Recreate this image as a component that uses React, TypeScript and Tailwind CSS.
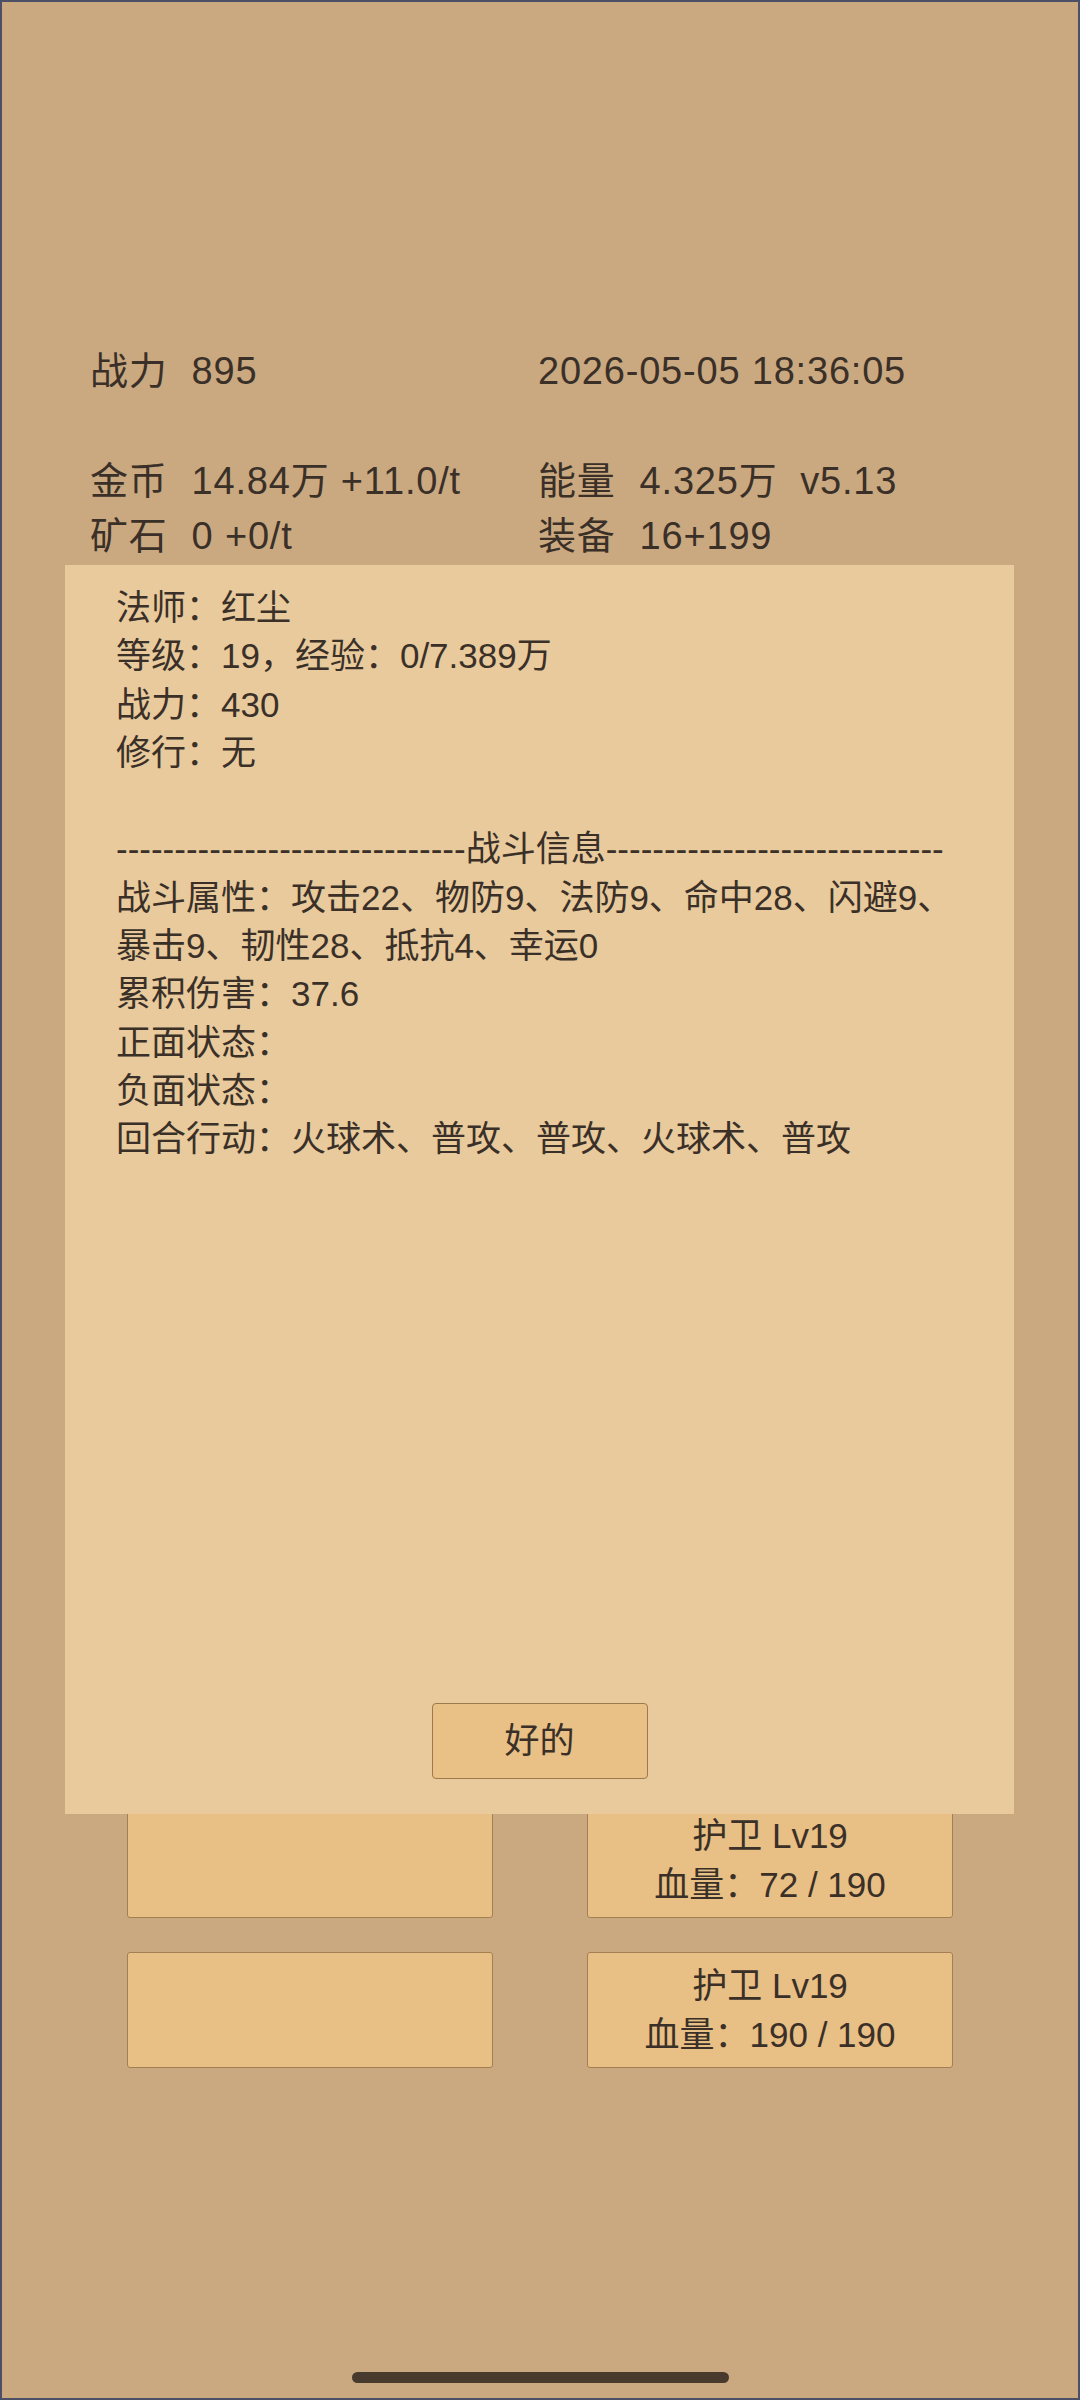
import React from 'react';

const FONT = "font-['Liberation_Sans','Noto_Sans_CJK_SC',sans-serif]";

const Stat = ({ label, children }: { label: string; children: React.ReactNode }) => (
  <div className="flex gap-[24px] whitespace-pre">
    <span>{label}</span>
    <span>{children}</span>
  </div>
);

const infoLines = [
  '法师：红尘',
  '等级：19，经验：0/7.389万',
  '战力：430',
  '修行：无',
];

const battleLines = [
  '战斗属性：攻击22、物防9、法防9、命中28、闪避9、',
  '暴击9、韧性28、抵抗4、幸运0',
  '累积伤害：37.6',
  '正面状态：',
  '负面状态：',
  '回合行动：火球术、普攻、普攻、火球术、普攻',
];

const units = [
  null,
  { name: '护卫 Lv19', hp: '血量：72 / 190' },
  null,
  { name: '护卫 Lv19', hp: '血量：190 / 190' },
];

const App = () => {
  return (
    <div
      className={`relative flex h-[2400px] w-[1080px] flex-col overflow-hidden border-2 border-[#4d4f66] bg-[#caa981] text-[#3a3028] ${FONT}`}
    >
      {/* top stats */}
      <div className="grid grid-cols-[448px_1fr] pl-[88px] pt-[342px] text-[38px] leading-[55px] tracking-[0.8px]">
        <Stat label="战力">895</Stat>
        <div>2026-05-05 18:36:05</div>
        <div className="h-[55px]" />
        <div className="h-[55px]" />
        <Stat label="金币">14.84万 +11.0/t</Stat>
        <Stat label="能量">4.325万  v5.13</Stat>
        <Stat label="矿石">0 +0/t</Stat>
        <Stat label="装备">16+199</Stat>
      </div>

      {/* units */}
      <div className="mt-[1238px] grid grid-cols-2 gap-x-[94px] gap-y-[34px] px-[125px]">
        {units.map((u, i) => (
          <div
            key={i}
            className="flex h-[116px] flex-col items-center justify-center rounded-[3px] border border-[#a47f52] bg-[#e8bf84] text-[35px] leading-[49px]"
          >
            {u && (
              <>
                <div>{u.name}</div>
                <div>{u.hp}</div>
              </>
            )}
          </div>
        ))}
      </div>

      {/* home indicator */}
      <div className="mt-auto flex justify-center pb-[15px]">
        <div className="h-[11px] w-[377px] rounded-full bg-[#483b2d]" />
      </div>

      {/* dialog */}
      <div className="absolute left-[63px] top-[563px] flex h-[1249px] w-[949px] flex-col bg-[#e8ca9d] pb-[35px]">
        <div className="flex-1 pl-[51px] pr-[30px] pt-[19px] text-[35px] leading-[48.3px]">
          {infoLines.map((l) => (
            <div key={l}>{l}</div>
          ))}
          <div className="h-[48.3px]" />
          <div className="whitespace-pre">
            {'-'.repeat(30)}战斗信息{'-'.repeat(29)}
          </div>
          {battleLines.map((l) => (
            <div key={l}>{l}</div>
          ))}
        </div>
        <div className="flex justify-center">
          <button className="h-[76px] w-[216px] rounded-[4px] border border-[#9c7a4e] bg-[#e9c186] text-[35px] text-[#3a3028]">
            好的
          </button>
        </div>
      </div>
    </div>
  );
};

export default App;
